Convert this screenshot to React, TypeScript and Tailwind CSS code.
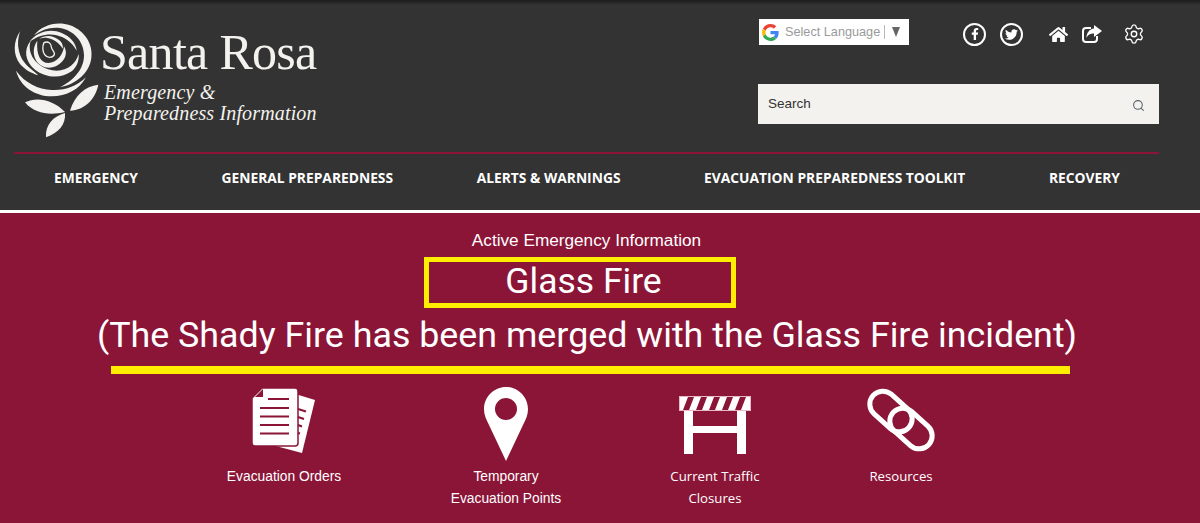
import React from 'react';
import { Search, Settings } from 'lucide-react';
import { FaFacebookF, FaTwitter, FaHome } from 'react-icons/fa';

const navItems = ['Emergency', 'General Preparedness', 'Alerts & Warnings', 'Evacuation Preparedness Toolkit', 'Recovery'];

const RoseLogo = () => (
  <svg width="95" height="122" viewBox="0 0 285 366" className="shrink-0" fill="#f4f2ee">
    <path d="M72 52C95 22 140 8 180 22C225 38 250 80 244 120C238 165 200 198 150 208C190 188 222 155 222 112C222 70 190 36 150 30C120 26 95 36 72 52Z" />
    <path d="M30 40C10 70 8 110 30 138C45 155 62 165 85 172C60 150 35 135 27 100C22 78 24 60 30 40Z" />
    <path d="M18 158C30 205 75 235 125 235C170 235 208 215 228 178C200 205 165 218 125 216C85 214 45 195 18 158Z" />
    <path d="M62 68C40 95 45 130 75 155C105 178 150 185 185 160C200 148 208 128 206 108C198 135 175 158 140 158C105 158 72 135 62 105C58 92 58 80 62 68Z" />
    <path d="M58 72C80 42 120 30 155 45C180 55 198 75 200 98C185 72 165 58 140 52C115 46 85 52 58 72Z" />
    <path d="M82 68C65 90 68 125 92 142C115 158 150 148 165 118C170 105 168 95 162 85C160 110 140 135 115 135C92 135 78 110 82 68Z" />
    <path d="M88 62C105 50 130 50 150 68C158 76 160 85 158 92C148 75 130 62 112 60C104 59 95 60 88 62Z" />
    <path d="M102 74C114 68 124 76 124 87C126 98 136 102 133 110C128 120 112 122 104 110C97 100 97 84 102 74Z" fill="none" stroke="#f4f2ee" strokeWidth="4" />
    <path d="M265 200C225 205 195 230 180 278C225 275 255 245 265 200Z" />
    <path d="M45 253C80 235 130 245 165 282C125 292 75 290 45 253Z" />
    <path d="M165 285C130 295 105 320 108 358C145 345 168 320 165 285Z" />
  </svg>
);

const GoogleG = () => (
  <svg width="17" height="17" viewBox="0 0 48 48" className="shrink-0">
    <path fill="#EA4335" d="M24 9.500c3.500 0 6.700 1.200 9.200 3.600l6.900-6.900C35.900 2.400 30.500 0 24 0 14.600 0 6.500 5.400 2.600 13.200l8 6.200C12.500 13.700 17.800 9.500 24 9.500z" />
    <path fill="#4285F4" d="M47 24.500c0-1.600-.1-3.100-.4-4.500H24v9h12.900c-.6 3-2.200 5.500-4.700 7.200l7.700 6C44.400 38 47 31.800 47 24.500z" />
    <path fill="#FBBC05" d="M10.500 28.600c-.5-1.400-.8-3-.8-4.600s.3-3.200.8-4.600l-8-6.200C.9 16.500 0 20.100 0 24s.9 7.500 2.600 10.800l7.900-6.200z" />
    <path fill="#34A853" d="M24 48c6.500 0 11.900-2.100 15.900-5.800l-7.700-6c-2.200 1.400-4.900 2.300-8.200 2.300-6.200 0-11.500-4.200-13.400-9.900l-8 6.200C6.500 42.600 14.600 48 24 48z" />
  </svg>
);

// outlined box with a solid arrow, the old font-awesome share icon
const ShareIcon = () => (
  <svg width="20" height="18" viewBox="0 0 20 18" className="ml-[14px]">
    <path fill="none" stroke="#fff" strokeWidth="2" d="M9 3H4C2.300 3 1 4.300 1 6V14C1 15.700 2.300 17 4 17H12C13.700 17 15 15.700 15 14V11" />
    <path fill="#fff" d="M12 0L20 6L12 12V8.500C8.500 8.500 6 9.500 4.500 13C4.500 7.500 7.500 4 12 3.500Z" />
  </svg>
);

const DocumentsIcon = () => (
  <svg width="64" height="66" viewBox="0 0 64 66">
    <path fill="#fff" d="M40 6L63 13L50 66L20 58Z" />
    <path fill="#fff" stroke="#8b1537" strokeWidth="1.500" d="M10 1H43C45 1 46 2 46 4V56C46 58 45 59 43 59H3C1 59 0 58 0 56V11Z" />
    <path fill="#8b1537" d="M3 10L11 2V10Z" />
    <path stroke="#8b1537" strokeWidth="2" d="M16 12H37M8 21H37M8 29.500H37M8 38H37M8 46.500H37M46 22L54 24.500M46 30L52 32M46 38L50 39.500M46 46L48 46.500" />
  </svg>
);

const PinIcon = () => (
  <svg width="44" height="74" viewBox="0 0 44 74">
    <path fill="#fff" fillRule="evenodd" d="M22 0C34 0 44 10 44 22C44 28 42 32 39 38L22 74L5 38C2 32 0 28 0 22C0 10 10 0 22 0ZM22 11A11 11 0 1 0 22 33A11 11 0 1 0 22 11Z" />
  </svg>
);

const BarricadeIcon = () => (
  <svg width="72" height="59" viewBox="0 0 72 59" className="mt-[9px]">
    <path fill="#fff" d="M5 14H14V58H5ZM58 14H67V58H58ZM14 30H58V37H14Z" />
    <rect x="0.500" y="0.500" width="71" height="14" fill="#8b1537" stroke="#e8b8c6" />
    <path fill="#fff" d="M1 1H9L4 14H1ZM15 1H22L17 14H10ZM28 1H35L30 14H23ZM41 1H48L43 14H36ZM54 1H61L56 14H49ZM67 1H71V14H62Z" />
  </svg>
);

const LinkIcon = () => (
  <svg width="70" height="64" viewBox="0 0 70 64" fill="none" stroke="#fff" strokeWidth="5" className="mt-[1px]">
    <rect x="1" y="10.500" width="48" height="26" rx="13" transform="rotate(42 25 23.500)" />
    <rect x="21" y="27.500" width="48" height="26" rx="13" transform="rotate(42 45 40.500)" />
  </svg>
);

const quickLinks = [
  { id: 'orders', lines: ['Evacuation Orders'], icon: <DocumentsIcon />, width: 'w-[222px]', font: "pt-[1px] font-['Liberation_Sans',sans-serif] text-[13.8px]" },
  { id: 'points', lines: ['Temporary', 'Evacuation Points'], icon: <PinIcon />, width: 'w-[222px]', font: "pt-[1px] font-['Liberation_Sans',sans-serif] text-[13.8px]" },
  { id: 'traffic', lines: ['Current Traffic', 'Closures'], icon: <BarricadeIcon />, width: 'w-[196px]', font: "font-['Open_Sans',sans-serif] text-[13.2px]" },
  { id: 'resources', lines: ['Resources'], icon: <LinkIcon />, width: 'w-[176px]', font: "font-['Open_Sans',sans-serif] text-[13.2px]" },
];

export default function App() {
  return (
    <div className="w-[1200px] h-[523px] overflow-hidden bg-[#8b1537] font-['Liberation_Sans',sans-serif]">
      {/* header */}
      <header className="h-[210px] bg-[#333333]">
        <div className="h-[5px] bg-gradient-to-b from-[#1c1c1c] to-[#333333]" />
        <div className="pl-[14px] pr-[41px]">
          <div className="flex justify-between h-[147px]">
            <div className="flex pt-[13px] -ml-[4px]">
              <RoseLogo />
              <div className="text-[#f4f2ee] -ml-[5px] pt-[9px]">
                <div className="font-['Liberation_Serif',serif] text-[50px] leading-[50px] tracking-[-0.7px]">Santa Rosa</div>
                <div className="font-['Liberation_Serif',serif] italic text-[20px] leading-[21px] mt-[5px] ml-[4px] tracking-[0.15px]">
                  Emergency &amp;<br />Preparedness Information
                </div>
              </div>
            </div>
            <div className="w-[401px] pt-[14px]">
              <div className="flex h-[30px]">
                <div className="flex items-center w-[150px] h-[26px] bg-white px-[3px] ml-[1px]">
                  <GoogleG />
                  <span className="ml-[6px] mt-[1px] text-[12.7px] text-[#9a9a9a]">Select Language</span>
                  <span className="ml-[4px] mr-[7px] h-[14px] border-l border-[#bbbbbb]" />
                  <span className="w-0 h-0 border-x-[4.5px] border-x-transparent border-t-[10px] border-t-[#666666]" />
                </div>
                <div className="flex items-center h-[30px] text-white ml-[54px]">
                  <span className="flex items-center justify-center w-[23px] h-[23px] rounded-full border-2 border-white">
                    <FaFacebookF size={12} />
                  </span>
                  <span className="flex items-center justify-center w-[23px] h-[23px] rounded-full border-2 border-white ml-[14px]">
                    <FaTwitter size={13} />
                  </span>
                  <FaHome size={19} className="ml-[26px]" />
                  <ShareIcon />
                  <Settings size={22} strokeWidth={1.500} className="ml-[21px]" />
                </div>
              </div>
              <div className="flex items-center justify-between h-[40px] mt-[35px] bg-[#f4f2ee] pl-[10px] pr-[14px]">
                <span className="text-[13.500px] text-[#333333]">Search</span>
                <Search size={13} className="text-[#5a6470] mt-[2px]" />
              </div>
            </div>
          </div>
          <div className="h-[2px] bg-[#8b1537]" />
          <nav className="flex justify-between pl-[40px] pr-[39px] pt-[14px] font-['Open_Sans',sans-serif] text-[13.8px] font-bold text-white uppercase">
            {navItems.map((item) => (
              <span key={item}>{item}</span>
            ))}
          </nav>
        </div>
      </header>
      <div className="h-[3px] bg-white" />

      {/* active emergency */}
      <main className="flex flex-col items-center text-white">
        <div className="mt-[17px] text-[17.2px] leading-[20px] -ml-[27px]">Active Emergency Information</div>
        <div className="flex items-center justify-center w-[312px] h-[51px] mt-[7px] -ml-[40px] pl-[7px] pb-[2px] border-[5px] border-[#ffee00] font-['Roboto',sans-serif] text-[35.5px]">
          Glass Fire
        </div>
        <div className="font-['Roboto',sans-serif] text-[35.8px] leading-[44px] mt-[5px] -ml-[26px] whitespace-nowrap">
          (The Shady Fire has been merged with the Glass Fire incident)
        </div>
        <div className="w-[959px] h-[8px] mt-[9px] -ml-[19px] bg-[#ffee00]" />
        <div className="flex w-[816px] mt-[13px] leading-[22px] -ml-[38px]">
          {quickLinks.map((link) => (
            <div key={link.id} className={`${link.width} flex flex-col items-center`}>
              <div className="h-[78px]">{link.icon}</div>
              <div className={`text-center ${link.font}`}>
                {link.lines.map((l) => (
                  <div key={l}>{l}</div>
                ))}
              </div>
            </div>
          ))}
        </div>
      </main>
    </div>
  );
}
